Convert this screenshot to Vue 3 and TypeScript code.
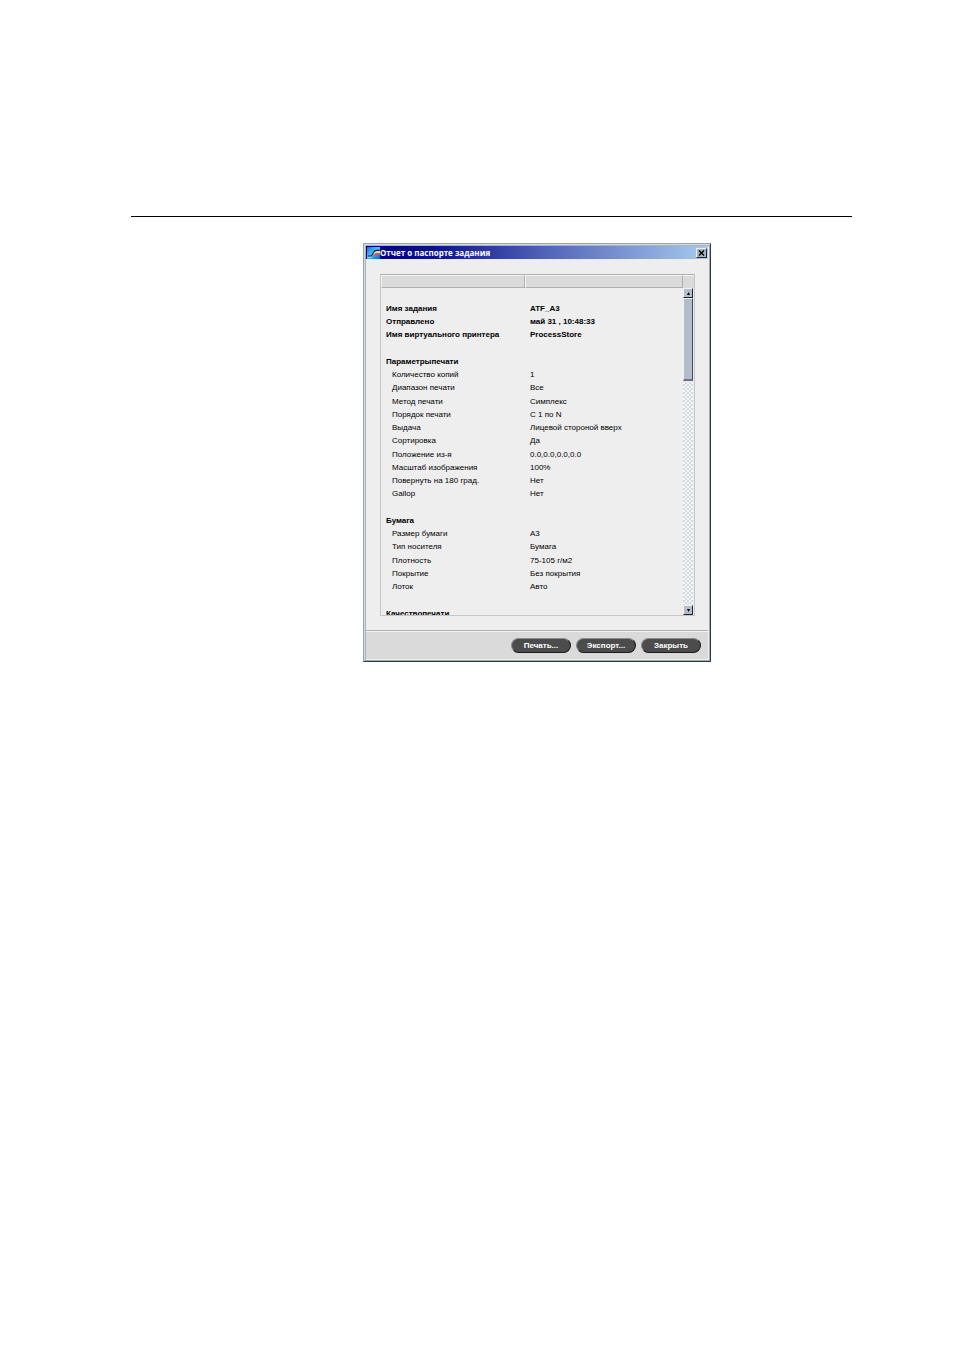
<script setup lang="ts">
interface Row {
  label: string
  value?: string
  kind: 'bold' | 'item' | 'blank'
}

const bold = (label: string, value = ''): Row => ({ label, value, kind: 'bold' })
const item = (label: string, value: string): Row => ({ label, value, kind: 'item' })
const blank = (): Row => ({ label: '', kind: 'blank' })

const rows: Row[] = [
  bold('Имя задания', 'ATF_A3'),
  bold('Отправлено', 'май 31 , 10:48:33'),
  bold('Имя виртуального принтера', 'ProcessStore'),
  blank(),
  bold('Параметрыпечати'),
  item('Количество копий', '1'),
  item('Диапазон печати', 'Все'),
  item('Метод печати', 'Симплекс'),
  item('Порядок печати', 'С 1 по N'),
  item('Выдача', 'Лицевой стороной вверх'),
  item('Сортировка', 'Да'),
  item('Положение из-я', '0.0,0.0,0.0,0.0'),
  item('Масштаб изображения', '100%'),
  item('Повернуть на 180 град.', 'Нет'),
  item('Gallop', 'Нет'),
  blank(),
  bold('Бумага'),
  item('Размер бумаги', 'A3'),
  item('Тип носителя', 'Бумага'),
  item('Плотность', '75-105 г/м2'),
  item('Покрытие', 'Без покрытия'),
  item('Лоток', 'Авто'),
  blank(),
  bold('Качествопечати'),
]

const actions: string[] = ['Печать...', 'Экспорт...', 'Закрыть']
</script>

<template>
  <main class="page">
    <hr class="rule" />
    <section class="dialog" role="dialog" aria-labelledby="dialog-title">
      <header class="titlebar">
        <svg class="logo" viewBox="0 0 13 12" aria-hidden="true">
          <defs>
            <linearGradient id="logo-bg" x1="0" y1="0" x2="1" y2="1">
              <stop offset="0" stop-color="#0a6fd8" />
              <stop offset="0.45" stop-color="#4cc0f0" />
              <stop offset="1" stop-color="#0a5fc8" />
            </linearGradient>
          </defs>
          <rect width="13" height="12" fill="url(#logo-bg)" />
          <path d="M6 6.4C7 4.6 8.4 4 13 4V6H9C7.4 6 7 8.8 4.6 9.4Z" fill="#f2e38a" />
          <path d="M7 7.6C8 6.2 9 6 13 6V7.4H9.4C8 7.4 7 9.6 4.6 10Z" fill="#e8487e" />
          <path d="M1 9H3.6C6.4 9 5.8 3.4 9 3.4H12.5" fill="none" stroke="#0a2250" stroke-width="1.2" />
          <path d="M1 10.4H5" stroke="#8be4f8" stroke-width="1" />
        </svg>
        <h1 id="dialog-title" class="title">Отчет о паспорте задания</h1>
        <button class="close" type="button" aria-label="Закрыть окно">
          <svg viewBox="0 0 7 6" aria-hidden="true">
            <path d="M1 0.5L6 5.5M6 0.5L1 5.5" stroke="#000" stroke-width="1.4" />
          </svg>
        </button>
      </header>

      <div class="content">
        <div class="report">
          <div class="viewport">
            <table>
              <colgroup>
                <col class="col-label" />
                <col />
              </colgroup>
              <thead>
                <tr><th scope="col"></th><th scope="col"></th></tr>
              </thead>
              <tbody>
                <tr v-for="(row, i) in rows" :key="i" :class="row.kind">
                  <td>{{ row.label }}</td>
                  <td>{{ row.value }}</td>
                </tr>
              </tbody>
            </table>
          </div>
          <div class="scroll">
            <div class="corner"></div>
            <button class="arrow" type="button" aria-label="Вверх">
              <svg viewBox="0 0 5 3" aria-hidden="true"><path d="M1 3L2.5 0L4 3Z" /></svg>
            </button>
            <div class="track"><div class="thumb"></div></div>
            <button class="arrow" type="button" aria-label="Вниз">
              <svg viewBox="0 0 5 3" aria-hidden="true"><path d="M1 0L2.5 3L4 0Z" /></svg>
            </button>
          </div>
        </div>
      </div>

      <footer class="footer">
        <button v-for="action in actions" :key="action" class="pill" type="button">{{ action }}</button>
      </footer>
    </section>
  </main>
</template>

<style>
body {
  margin: 0;
  background: #fff;
}
</style>

<style scoped>
* {
  box-sizing: border-box;
}

.page {
  padding: 216px 102px 40px 131px;
  font: 8px/13px "Liberation Sans", Arial, sans-serif;
  color: #000;
}

.rule {
  height: 1px;
  margin: 0 0 26px;
  border: 0;
  background: #000;
}

.dialog {
  max-width: 348px;
  margin-left: 232px;
  padding: 2px;
  border: 1px solid #9aa5aa;
  border-right-color: #2c3a42;
  border-bottom-color: #2c3a42;
  background: #eee;
  box-shadow: inset 1px 1px #d4dade, inset -1px -1px #9caab4, inset 2px 2px #a8b4bc;
}

.titlebar {
  display: flex;
  align-items: center;
  height: 13px;
  padding: 0 1px;
  background: linear-gradient(90deg, #00007f, #0a1487 20%, #5364b8 53%, #a6caf0);
}

.logo {
  flex: none;
  width: 13px;
  height: 12px;
}

.title {
  flex: 1;
  margin: 0;
  font: bold 8px/12px "Open Sans", "Noto Sans", sans-serif;
  color: #fff;
  white-space: nowrap;
}

.close {
  display: flex;
  align-items: center;
  justify-content: center;
  width: 11px;
  height: 10px;
  padding: 0;
  border: 1px solid #e8eef2;
  border-right-color: #222c32;
  border-bottom-color: #222c32;
  background: #aab4b8;
}

.close svg {
  width: 7px;
  height: 6px;
}

.content {
  padding: 15px 13px 14px 14px;
}

.report {
  display: flex;
  height: 342px;
  border: 1px solid #c6c6c6;
  border-top-color: #b0b0b0;
}

.viewport {
  flex: 1;
  overflow: hidden;
}

table {
  width: 100%;
  table-layout: fixed;
  border-collapse: separate;
  border-spacing: 0;
}

.col-label {
  width: 144px;
}

th {
  height: 13px;
  padding: 0;
  border: 1px solid #f4f4f4;
  border-right-color: #b0b0b0;
  border-bottom-color: #b0b0b0;
  background: #dadada;
}

tbody::before {
  content: "";
  display: table-row;
  height: 14px;
}

td {
  height: 13px;
  padding: 0 0 0 5px;
  line-height: 13px;
  white-space: nowrap;
}

tbody tr:nth-child(4n) td {
  height: 14px;
}

.bold td {
  font-weight: bold;
}

.item td:first-child {
  padding-left: 11px;
}

.scroll {
  display: flex;
  flex-direction: column;
  width: 11px;
}

.corner {
  height: 13px;
  border-top: 1px solid #f4f4f4;
  background: #dadada;
}

.arrow {
  display: flex;
  align-items: center;
  justify-content: center;
  height: 10px;
  margin-right: 1px;
  padding: 0;
  border: 1px solid #eef3f6;
  border-right-color: #1c2430;
  border-bottom-color: #1c2430;
  background: #b4becb;
}

.arrow svg {
  width: 5px;
  height: 3px;
}

.track {
  flex: 1;
  margin-right: 1px;
  background: repeating-conic-gradient(#d2d9de 0 25%, #f6f8f9 0 50%) 0 0 / 4px 4px;
}

.thumb {
  height: 27%;
  border: 1px solid #eef3f6;
  border-right-color: #3e4856;
  border-bottom: 2px solid #6b7480;
  background: #b1bdca;
}

.footer {
  display: flex;
  align-items: center;
  justify-content: flex-end;
  gap: 5px;
  height: 29px;
  padding-right: 7px;
  border-top: 1px solid #b0b0b0;
  background: #dadada;
  box-shadow: inset 0 1px #f4f4f4;
}

.pill {
  width: 60px;
  height: 15px;
  padding: 0;
  border: 1px solid #8c8c8c;
  border-right-color: #1c1c1c;
  border-bottom-color: #1c1c1c;
  border-radius: 8px;
  background: #4c4c4c;
  font: bold 8px/13px "Liberation Sans", Arial, sans-serif;
  color: #fff;
}
</style>
